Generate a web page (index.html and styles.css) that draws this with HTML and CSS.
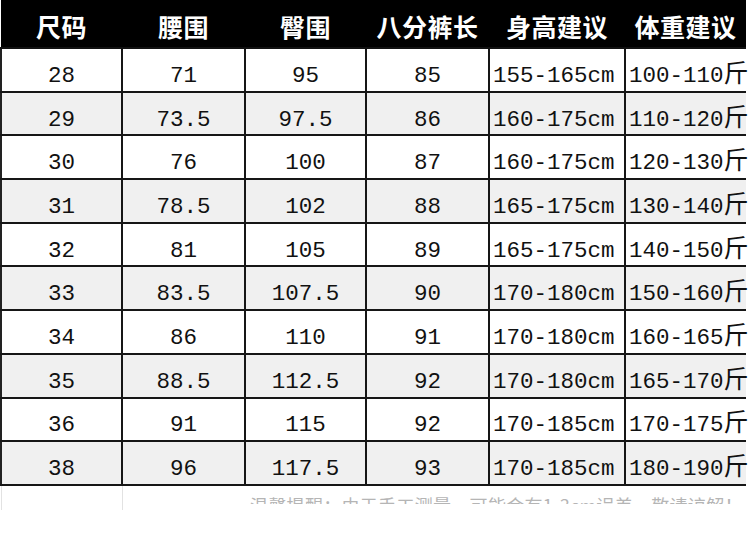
FILE: index.html
```html
<!DOCTYPE html>
<html lang="zh">
<head>
<meta charset="utf-8">
<title>尺码表</title>
<link rel="stylesheet" href="styles.css">
</head>
<body>
<div class="page">
  <table class="chart">
    <colgroup>
      <col class="c1"><col class="c2"><col class="c3"><col class="c4"><col class="c5"><col class="c6">
    </colgroup>
    <thead>
      <tr><th>尺码</th><th>腰围</th><th>臀围</th><th>八分裤长</th><th>身高建议</th><th>体重建议</th></tr>
    </thead>
    <tbody>
      <tr><td>28</td><td>71</td><td>95</td><td>85</td><td class="l">155-165cm</td><td class="l">100-110<span class="u">斤</span></td></tr>
      <tr><td>29</td><td>73.5</td><td>97.5</td><td>86</td><td class="l">160-175cm</td><td class="l">110-120<span class="u">斤</span></td></tr>
      <tr><td>30</td><td>76</td><td>100</td><td>87</td><td class="l">160-175cm</td><td class="l">120-130<span class="u">斤</span></td></tr>
      <tr><td>31</td><td>78.5</td><td>102</td><td>88</td><td class="l">165-175cm</td><td class="l">130-140<span class="u">斤</span></td></tr>
      <tr><td>32</td><td>81</td><td>105</td><td>89</td><td class="l">165-175cm</td><td class="l">140-150<span class="u">斤</span></td></tr>
      <tr><td>33</td><td>83.5</td><td>107.5</td><td>90</td><td class="l">170-180cm</td><td class="l">150-160<span class="u">斤</span></td></tr>
      <tr><td>34</td><td>86</td><td>110</td><td>91</td><td class="l">170-180cm</td><td class="l">160-165<span class="u">斤</span></td></tr>
      <tr><td>35</td><td>88.5</td><td>112.5</td><td>92</td><td class="l">170-180cm</td><td class="l">165-170<span class="u">斤</span></td></tr>
      <tr><td>36</td><td>91</td><td>115</td><td>92</td><td class="l">170-185cm</td><td class="l">170-175<span class="u">斤</span></td></tr>
      <tr><td>38</td><td>96</td><td>117.5</td><td>93</td><td class="l">170-185cm</td><td class="l">180-190<span class="u">斤</span></td></tr>
    </tbody>
  </table>
  <div class="note-row">
    <div class="ghost g1"></div>
    <div class="ghost g2"></div>
    <div class="note">温馨提醒：由于手工测量，可能会有1-3cm误差，敬请谅解！</div>
  </div>
</div>
</body>
</html>
```
FILE: styles.css
```css
html, body {
  margin: 0;
  padding: 0;
  background: #fff;
}
.page {
  width: 750px;
  height: 534px;
  overflow: hidden;
  background: #fff;
}
.chart {
  width: 745px;
  border-collapse: collapse;
  table-layout: fixed;
}
.c1 { width: 121px; }
.c2 { width: 123px; }
.c3 { width: 121px; }
.c4 { width: 123px; }
.c5 { width: 136px; }
.c6 { width: 121px; }
.chart th {
  background: #000;
  color: #fff;
  height: 48px;
  padding: 4px 0 0 0;
  box-sizing: border-box;
  font-family: "Noto Sans CJK SC", sans-serif;
  font-weight: 700;
  font-size: 25px;
  letter-spacing: 0.5px;
  white-space: nowrap;
  text-align: center;
  border: 0;
  border-bottom: 2px solid #111;
}
.chart td {
  height: 43.7px;
  padding: 12px 0 0 0;
  box-sizing: border-box;
  border: 2px solid #161616;
  text-align: center;
  vertical-align: middle;
  font-family: "Liberation Mono", monospace;
  font-size: 22.5px;
  line-height: 24px;
  color: #111;
  white-space: nowrap;
  overflow: visible;
}
.chart td:first-child { border-left: 2px solid #222; }
.chart td:last-child { border-right: 0; }
.chart td.l {
  text-align: left;
  padding-left: 3px;
}
.chart tbody tr:nth-child(even) td {
  background: #f0f0f0;
}
.u {
  font-family: "Noto Sans CJK SC", sans-serif;
  font-size: 25px;
  line-height: 0;
  vertical-align: baseline;
}
.note-row {
  display: flex;
  height: 30px;
}
.ghost {
  width: 1px;
  height: 24px;
  background: #e2e2e2;
}
.g1 { margin-left: 1px; }
.g2 { margin-left: 120px; }
.note {
  margin-left: 127px;
  margin-top: 8px;
  height: 10px;
  overflow: hidden;
  font-family: "Noto Sans CJK SC", sans-serif;
  font-size: 18px;
  line-height: 22px;
  color: #b5b5b5;
  white-space: nowrap;
  letter-spacing: 0.3px;
}
```
